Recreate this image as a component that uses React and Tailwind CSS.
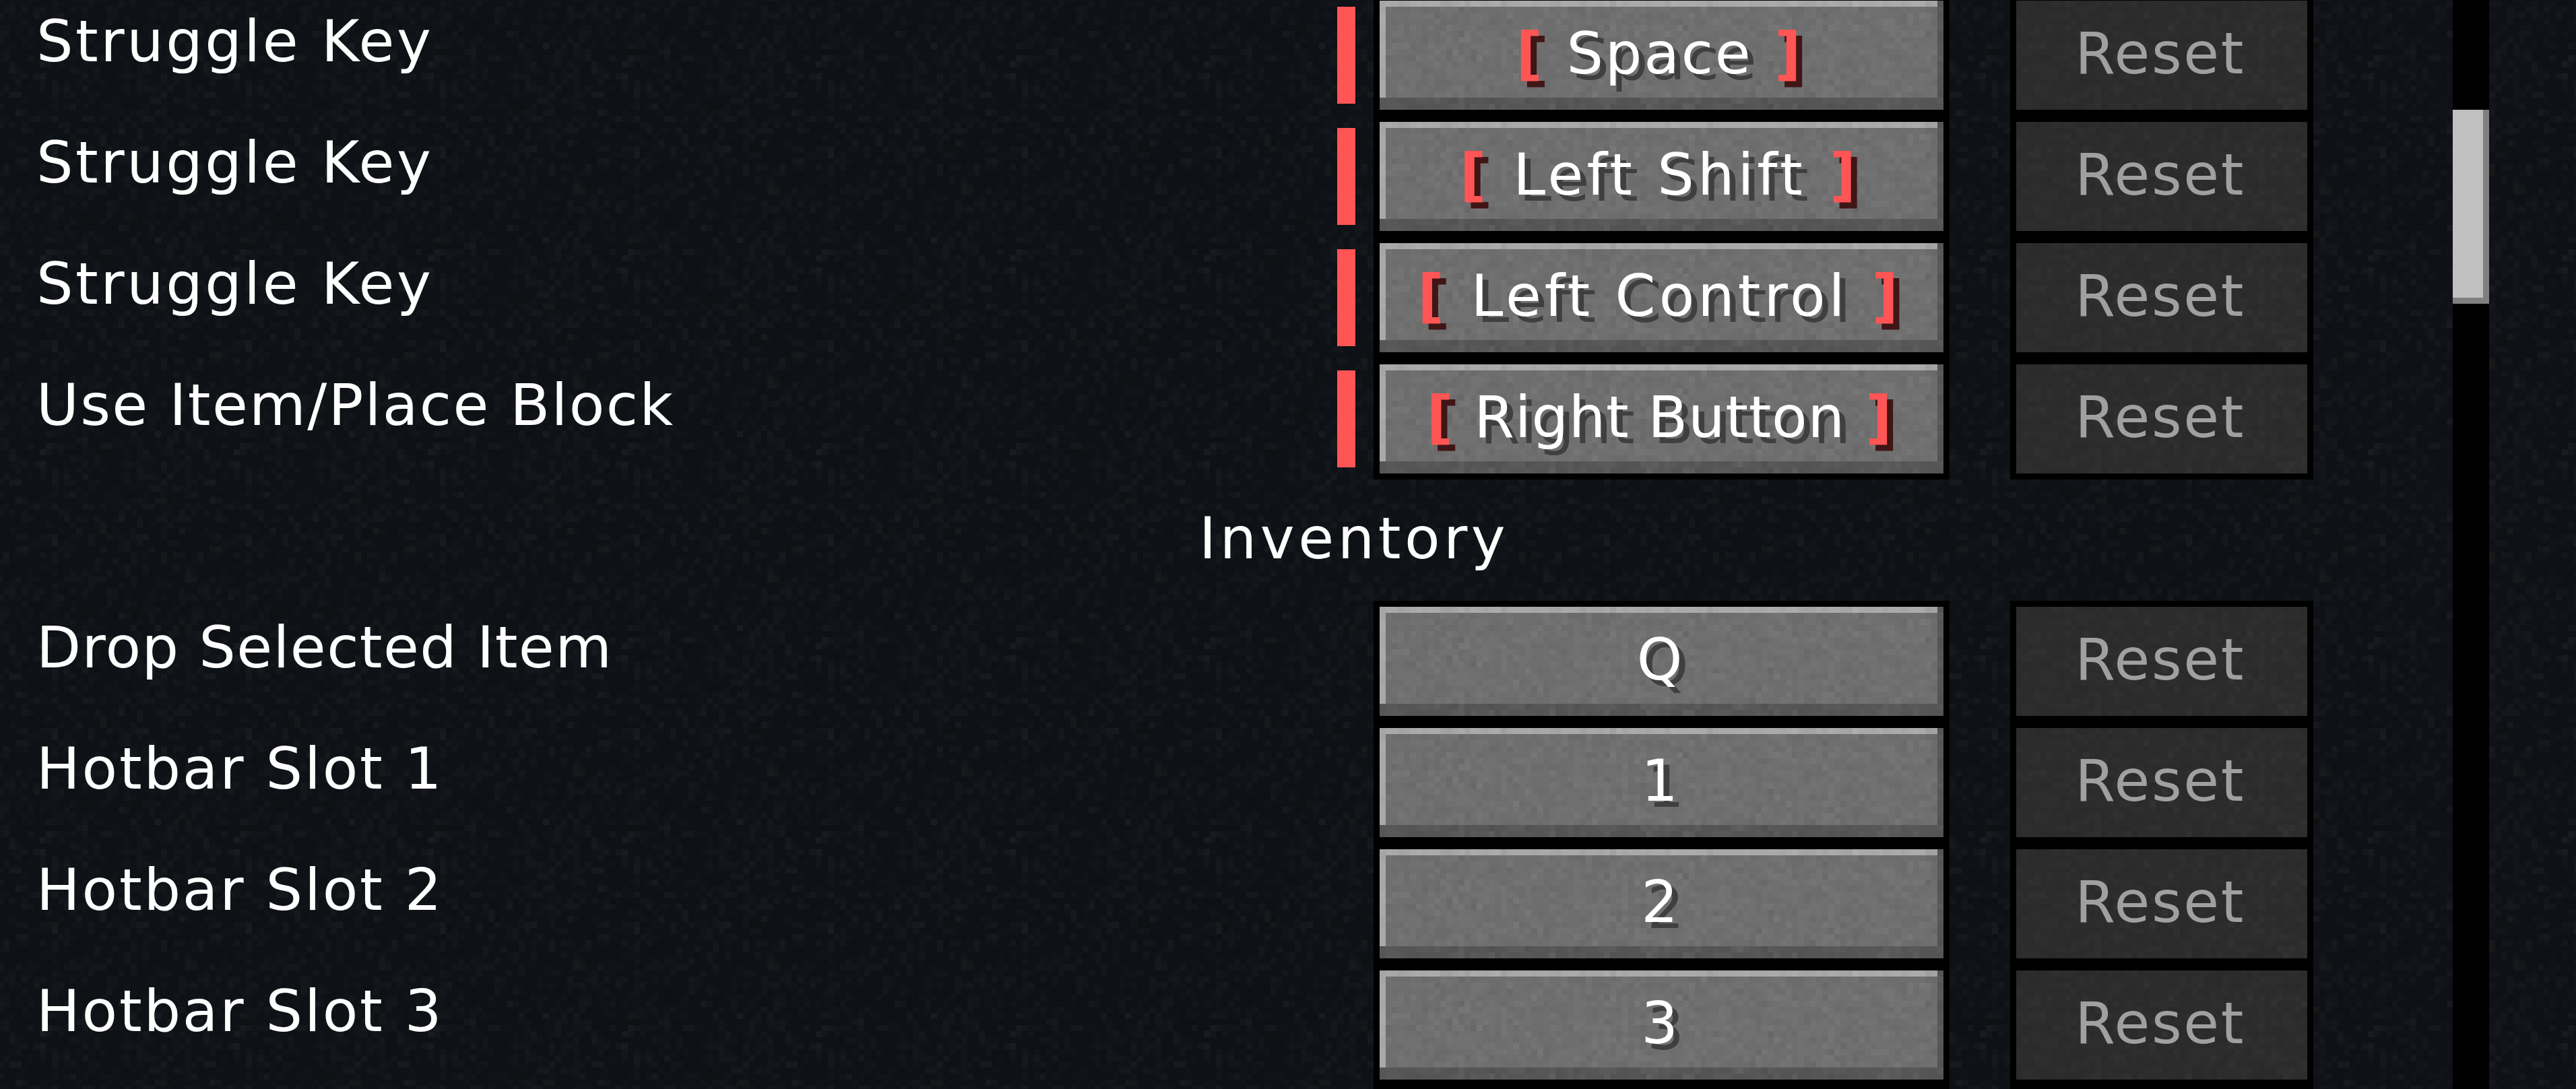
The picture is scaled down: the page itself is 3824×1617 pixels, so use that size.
const FONT = "font-['DejaVu_Sans',sans-serif]"

// seeded so the noise stays the same between renders
function makeCells(cols, rows, seed, amount) {
  let s = seed
  const rand = () => {
    s = (s + 0x6d2b79f5) | 0
    let t = Math.imul(s ^ (s >>> 15), 1 | s)
    t = (t + Math.imul(t ^ (t >>> 7), 61 | t)) ^ t
    return ((t ^ (t >>> 14)) >>> 0) / 4294967296
  }
  const cells = []
  for (let y = 0; y < rows; y++) {
    for (let x = 0; x < cols; x++) {
      const v = (rand() + rand() + rand()) / 1.5 - 1
      if (Math.abs(v) > 0.08) cells.push({ x: x * 9, y: y * 9, v: v * amount })
    }
  }
  return cells
}

const DIRT = makeCells(32, 32, 11, 0.05)
const STONE = makeCells(96, 18, 47, 0.07)

function NoiseRects({ cells }) {
  return cells.map(c => (
    <rect key={`${c.x}-${c.y}`} x={c.x} y={c.y} width="9" height="9"
      fill={c.v > 0 ? '#fff' : '#000'} fillOpacity={Math.abs(c.v)} />
  ))
}

function StoneNoise() {
  return (
    <svg className="absolute inset-0 w-full h-full" shapeRendering="crispEdges">
      <rect width="100%" height="100%" fill="url(#stone)" />
    </svg>
  )
}

const STRUGGLE = 'tracking-[3.5px]'
const HOTBAR = 'tracking-[2.8px]'

const KEY_ROWS = [
  { type: 'key', label: 'Struggle Key', labelClass: STRUGGLE, key: 'Space', keyClass: 'tracking-[2.8px]', conflict: true },
  { type: 'key', label: 'Struggle Key', labelClass: STRUGGLE, key: 'Left Shift', keyClass: 'tracking-[5px]', conflict: true },
  { type: 'key', label: 'Struggle Key', labelClass: STRUGGLE, key: 'Left Control', keyClass: 'tracking-[5px]', conflict: true },
  { type: 'key', label: 'Use Item/Place Block', labelClass: 'tracking-[2.3px]', key: 'Right Button', keyClass: 'tracking-[0.7px]', conflict: true },
  { type: 'section', label: 'Inventory' },
  { type: 'key', label: 'Drop Selected Item', labelClass: 'tracking-[1.4px]', key: 'Q' },
  { type: 'key', label: 'Hotbar Slot 1', labelClass: HOTBAR, key: '1' },
  { type: 'key', label: 'Hotbar Slot 2', labelClass: HOTBAR, key: '2' },
  { type: 'key', label: 'Hotbar Slot 3', labelClass: HOTBAR, key: '3' },
  { type: 'peek' },
]

function KeyButton({ name, conflict, keyClass }) {
  return (
    <div className="bg-black p-[9px] w-[855px] h-[180px] shrink-0">
      <div className="relative h-full flex items-center justify-center pb-[6px] pr-[6px] bg-[#6f6f6f] shadow-[inset_-9px_-18px_0_#565656,inset_9px_9px_0_#a9a9a9]">
        <StoneNoise />
        <span className={`relative whitespace-pre text-white [text-shadow:9px_9px_0_#3f3f3f] ${keyClass ?? ''}`}>
          {conflict && <span className="font-bold text-[#ff5555] [text-shadow:9px_9px_0_#3f1515]">[ </span>}
          {name}
          {conflict && <span className="font-bold text-[#ff5555] [text-shadow:9px_9px_0_#3f1515]"> ]</span>}
        </span>
      </div>
    </div>
  )
}

function ResetButton() {
  return (
    <div className="bg-black p-[9px] w-[450px] h-[180px] shrink-0 ml-[90px]">
      <div className="relative h-full flex items-center justify-center pb-[6px] pr-[5px] bg-[#2c2c2c]">
        <div className="absolute inset-0 opacity-50"><StoneNoise /></div>
        <span className="relative text-[#a0a0a0] tracking-[2.5px]">Reset</span>
      </div>
    </div>
  )
}

function Row({ row }) {
  if (row.type === 'section') {
    return (
      <div className="h-[180px] pl-[1780px] pt-[37px] text-white tracking-[5.5px]">{row.label}</div>
    )
  }
  // next row, only the top of its button outlines fits in the window
  if (row.type === 'peek') {
    return (
      <div className="h-[180px] flex pl-[2039px]">
        <div className="w-[855px] h-full bg-black" />
        <div className="w-[450px] h-full bg-black ml-[90px]" />
      </div>
    )
  }
  return (
    <div className="h-[180px] flex">
      <div className={`w-[1985px] shrink-0 pl-[54px] pt-[19px] text-white whitespace-nowrap ${row.labelClass}`}>{row.label}</div>
      <div className="w-[54px] shrink-0 pt-[18px]">
        {row.conflict && <div className="w-[27px] h-[144px] bg-[#ff5555]" />}
      </div>
      <KeyButton name={row.key} conflict={row.conflict} keyClass={row.keyClass} />
      <ResetButton />
    </div>
  )
}

export default function App() {
  return (
    <div className={`relative w-[3824px] h-[1617px] overflow-hidden bg-[#0e1115] flex text-[86px] leading-[100px] ${FONT}`}>
      <svg className="absolute inset-0 w-full h-full" shapeRendering="crispEdges">
        <defs>
          <pattern id="dirt" width="288" height="288" patternUnits="userSpaceOnUse" patternTransform="translate(5 1)">
            <NoiseRects cells={DIRT} />
          </pattern>
          <pattern id="stone" width="864" height="162" patternUnits="userSpaceOnUse">
            <NoiseRects cells={STONE} />
          </pattern>
        </defs>
        <rect width="100%" height="100%" fill="url(#dirt)" />
      </svg>

      <div className="relative w-[3641px] shrink-0 mt-[-8px]">
        {KEY_ROWS.map((row, i) => <Row key={i} row={row} />)}
      </div>

      <div className="relative w-[54px] h-full shrink-0 bg-black pt-[163px]">
        <div className="h-[288px] bg-[#c0c0c0] shadow-[inset_-9px_-9px_0_#808080]" />
      </div>
    </div>
  )
}
